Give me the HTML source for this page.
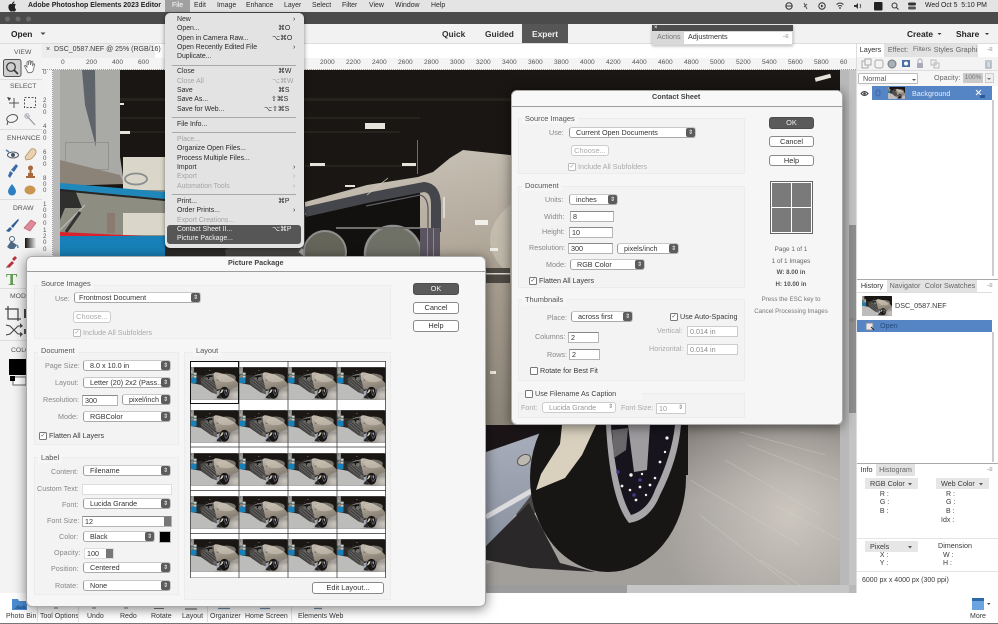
<!DOCTYPE html>
<html><head><meta charset="utf-8"><title>Photoshop Elements</title>
<style>
html,body{margin:0;padding:0;background:#fff}
#w{position:relative;width:998px;height:624px;overflow:hidden;background:#f1f1f1;font-family:"Liberation Sans",sans-serif;color:#333;filter:blur(.3px)}
#w div,#w svg{position:absolute}
.t{position:absolute;line-height:10px;height:10px;white-space:nowrap;font-size:7.2px;color:#3a3a3a}
.l{color:#888}
.d{color:#aaa}
.b{font-weight:bold}
.m{font-size:6.9px;color:#2a2a2a}
.s{position:absolute;background:#fff;border:1px solid #c8c8c8;border-left-color:#999;border-bottom-color:#aaa;border-radius:3px;box-sizing:border-box;font-size:7.2px;line-height:10px;color:#333;padding-left:6px;white-space:nowrap}
.s i{position:absolute;right:0;top:0;bottom:0;width:9px;background:#5c5c5c;border-radius:2px;color:#fff;font:normal 6px/10px "DejaVu Sans",sans-serif;text-align:center}
.n{position:absolute;background:#fff;border:1px solid #b5b5b5;border-top-color:#888;box-sizing:border-box;font-size:7.2px;line-height:9px;padding-left:2px;color:#333}
.g{position:absolute;background:#f3f3f3;border:1px solid #ececec;box-sizing:border-box}
.h{position:absolute;background:#f6f6f6;padding:0 3px;font-size:7.4px;line-height:10px;height:10px;color:#555}
.c{position:absolute;width:8px;height:8px;box-sizing:border-box;border:1px solid #777;border-radius:1.5px;background:#fff;font:bold 6px/6px "DejaVu Sans",sans-serif;color:#444;text-align:center}
.c.o{border-color:#bbb;color:#999}
.bt{position:absolute;box-sizing:border-box;background:#fff;border:1px solid #8a8a8a;border-radius:3px;text-align:center;font-size:7.4px;line-height:9px;color:#333}
.bt.k{background:#5a5a5a;color:#eee;border-color:#4d4d4d}
.bt.o{color:#aaa;border-color:#ccc}
.dl{position:absolute;background:#f6f6f6;border-radius:6px;box-shadow:0 2px 12px rgba(0,0,0,.5);border:1px solid #aaa;box-sizing:border-box}
.tab{position:absolute;background:#e2e2e2;font-size:7.2px;line-height:12px;text-align:center;color:#666}
.tab.a{background:#fff;color:#333}
</style></head><body><div id="w">

<svg width="0" height="0" style="left:0;top:0"><defs>
<linearGradient id="fd" gradientUnits="userSpaceOnUse" x1="0" y1="425" x2="0" y2="500"><stop offset="0" stop-color="#7e7974" stop-opacity=".9"/><stop offset="1" stop-color="#7e7974" stop-opacity="0"/></linearGradient>
<radialGradient id="fb" gradientUnits="userSpaceOnUse" cx="790" cy="515" r="130"><stop offset="0" stop-color="#cbc6be"/><stop offset="1" stop-color="#cbc6be" stop-opacity="0"/></radialGradient>
<linearGradient id="bd" gradientUnits="userSpaceOnUse" x1="440" y1="150" x2="500" y2="425"><stop offset="0" stop-color="#c6bfb3"/><stop offset=".45" stop-color="#aba193"/><stop offset="1" stop-color="#8c8478"/></linearGradient>
<linearGradient id="fn" x1="0" y1="0" x2="0" y2="1"><stop offset="0" stop-color="#a9afbb"/><stop offset="1" stop-color="#8b92a0"/></linearGradient>
<linearGradient id="gr" x1="0" y1="0" x2="1" y2="0"><stop offset="0" stop-color="#111"/><stop offset="1" stop-color="#eee"/></linearGradient>
<symbol id="p" viewBox="0 0 780 520"><g transform="translate(-60 -70)">
<rect x="60" y="70" width="780" height="520" fill="#191613"/>
<rect x="120" y="98" width="720" height="3" fill="#26221e"/><rect x="120" y="117" width="300" height="2" fill="#26221e"/><rect x="120" y="131" width="280" height="2" fill="#26221e"/><rect x="305" y="165" width="110" height="2" fill="#26221e"/>
<g fill="#e6e3da"><rect x="365" y="123" width="20" height="6"/><rect x="310" y="163" width="15" height="3"/><rect x="402" y="163" width="14" height="3"/><rect x="345" y="185" width="10" height="2"/><rect x="120" y="131" width="10" height="3"/><rect x="120" y="103" width="4" height="2"/><rect x="815" y="76" width="16" height="4" transform="rotate(-15 822 78)"/></g>
<rect x="417" y="140" width="1" height="34" fill="#6e6e6c"/>
<!-- left wall -->
<path d="M60 70H120V157L124 183H60Z" fill="#a9a9a5"/>
<path d="M82 70H95L96 147L85 105Z" fill="#5f646b"/>
<rect x="65.500" y="142.500" width="43" height="27" fill="none" stroke="#929290"/>
<path d="M60 160L120 175L124 184L60 186Z" fill="#8b8278"/>
<rect x="123" y="157" width="42" height="40" fill="#dad7ca"/>
<ellipse cx="136" cy="179" rx="11" ry="5.500" fill="none" stroke="#8c8d90" stroke-width="1.800"/>
<rect x="60" y="190" width="105" height="50" fill="#8d8d82"/>
<rect x="123" y="213" width="42" height="22" fill="#dad7ca"/>
<rect x="107" y="213" width="8" height="20" fill="#8a7a70"/>
<path d="M60 190H75L82 208H65L60 220Z" fill="#2f2f2d"/>
<path d="M60 230L85 205" stroke="#bdbdb6" stroke-width="1.200"/><path d="M66 232L80 212" stroke="#333" stroke-width="3"/>
<path d="M60 183L165 192V199L60 189Z" fill="#1f87ba"/><path d="M60 189L165 199V201L60 191Z" fill="#252525"/>
<path d="M60 232L165 237V240L60 236Z" fill="#d8222c"/>
<path d="M60 236H165V330L60 320Z" fill="#1880b8"/>
<!-- lower left floor & front (only seen in thumbnails) -->
<path d="M60 320L230 350L400 470L560 520L590 590H60Z" fill="#bcbcbb"/>
<path d="M165 192L305 202L305 260L240 340L165 330Z" fill="#2e2c2a"/>
<path d="M225 250L310 205L440 250L590 430L530 520L400 470L240 350Z" fill="#4b4947"/>
<g stroke="#a6a6a4" stroke-width="5" fill="none"><path d="M240 290L420 440M270 270L460 430M300 250L500 410M330 240L530 400"/></g>
<g stroke="#1d1d1d" stroke-width="4" fill="none"><path d="M255 285L440 440M290 265L480 420M320 245L515 405"/></g>
<!-- body beige -->
<path d="M305 202L367 185L418 177L433 172L450 158L463 150L510 155L640 190L780 270L840 340V370L700 425H486L455 300L440 255L305 240Z" fill="url(#bd)"/>
<ellipse cx="640" cy="240" rx="150" ry="70" fill="#d4cdbf" opacity=".5"/>
<!-- floor -->
<path d="M840 365V590H420L600 520L680 425L700 425Z" fill="#a29e9a"/>
<rect x="430" y="425" width="410" height="165" fill="url(#fd)"/>
<rect x="640" y="425" width="200" height="165" fill="url(#fb)"/>
<g stroke="#d8d4ce" stroke-width=".8" fill="none" opacity=".4"><path d="M740 432L825 455M748 445L838 480M690 480L800 545M700 515L790 585M775 505L840 540M725 460L820 515M760 560L800 585"/></g>
<!-- chrome arch -->
<path d="M305 215L367 202L420 192V258H305Z" fill="#131110"/>
<path d="M305 212L367 198L424 187Q436 188 436 205V232" stroke="#45464b" stroke-width="10" fill="none"/>
<path d="M366 206L420 195Q428 197 428 210V230" stroke="#5c5d63" stroke-width="1.300" fill="none"/>
<path d="M367 195L388 178" stroke="#cfcabd" stroke-width=".8"/>
<circle cx="325" cy="252" r="21" fill="#65655a" stroke="#8f8f8f" stroke-width="2"/>
<circle cx="393" cy="254" r="28" fill="#6f7066" stroke="#8f8f8f" stroke-width="2.500"/>
<rect x="336" y="227" width="84" height="2" fill="#6e6e6a"/>
<rect x="420" y="228" width="20" height="28" fill="#5a5460"/><rect x="427" y="228" width="1" height="28" fill="#8e8a94"/><rect x="433" y="228" width="1" height="28" fill="#8e8a94"/>
<rect x="443" y="197" width="2" height="21" fill="#ddd9cf"/>
<rect x="475" y="220" width="13" height="5" fill="#f2f0ea"/><rect x="490" y="248" width="8" height="3" fill="#efece5"/>
<rect x="486" y="268" width="24" height="15" fill="#4f4a44"/><rect x="486" y="273" width="24" height="1.500" fill="#dcd8ce"/>
<rect x="490" y="371" width="6" height="3" fill="#eeeae2"/>
<!-- dark band & fender -->
<rect x="486" y="425" width="60" height="30" fill="#1b1518"/>
<path d="M486 452L564 425V433L536 487L529 498L496 540L486 546Z" fill="url(#fn)"/>
<path d="M486 517L533 490" stroke="#dcdcde" stroke-width="5"/>
<ellipse cx="524" cy="460" rx="7" ry="5" fill="#bdb9b0" stroke="#555" transform="rotate(-30 524 460)"/>
<path d="M486 546L529 503L560 563L595 572L530 568L486 560Z" fill="#2a2829"/>
<!-- tyre: solid black -->
<ellipse cx="608" cy="478" rx="78" ry="94" fill="#181615"/>
<rect x="590" y="425" width="98" height="50" fill="#181615"/>
<!-- beige flare over the tyre's upper left -->
<path d="M562 425H596L582 455L565 478L536 490L541 474L560 444Z" fill="#d9d1be"/>
<!-- rim -->
<path d="M606 425Q610 500 629 523Q650 520 660 495Q678 460 681 425Z" fill="#a8a6a8"/>
<path d="M611 425Q616 490 631 515Q648 510 655 490Q672 455 675 425Z" fill="#17141d"/>
<path d="M628 425H650L647 470L634 472Z" fill="#9e9c9e"/>
<path d="M612 430L628 428L626 450L614 458Z" fill="#6a686a"/>
<g fill="#f4f2f2"><circle cx="622" cy="486" r="1.400"/><circle cx="630" cy="490" r="1.300"/><circle cx="636" cy="500" r="1.400"/><circle cx="640" cy="487" r="1.400"/><circle cx="646" cy="495" r="1.200"/><circle cx="650" cy="485" r="1.400"/><circle cx="655" cy="478" r="1.300"/><circle cx="660" cy="462" r="1.400"/><circle cx="665" cy="452" r="1.200"/><circle cx="667" cy="438" r="1.600"/><circle cx="631" cy="475" r="1.700"/><circle cx="642" cy="474" r="1.200"/></g>
<g fill="#3c3c8c"><circle cx="618" cy="472" r="1.800"/><circle cx="634" cy="495" r="1.800"/><circle cx="640" cy="480" r="1.800"/></g>
</g></symbol>
</defs></svg>

<!-- menu bar -->
<div style="left:0;top:0;width:998px;height:12px;background:#e4e4e4"></div>
<div style="left:165px;top:0;width:25px;height:12px;background:#a0a0a0"></div>
<div class="t b" style="left:28px;top:1px;font-size:7px;color:#222">Adobe Photoshop Elements 2023 Editor</div>
<div class="t m" style="left:172px;top:1px;color:#fff">File</div>
<div class="t m" style="left:194px;top:1px">Edit</div>
<div class="t m" style="left:217px;top:1px">Image</div>
<div class="t m" style="left:246px;top:1px">Enhance</div>
<div class="t m" style="left:284px;top:1px">Layer</div>
<div class="t m" style="left:312px;top:1px">Select</div>
<div class="t m" style="left:342px;top:1px">Filter</div>
<div class="t m" style="left:369px;top:1px">View</div>
<div class="t m" style="left:395px;top:1px">Window</div>
<div class="t m" style="left:431px;top:1px">Help</div>
<div class="t m" style="left:925px;top:1px;color:#222">Wed Oct 5&nbsp; 5:10 PM</div>
<!-- title bar -->
<div style="left:0;top:12px;width:998px;height:12px;background:#4b4b4b"></div>
<!-- top toolbar -->
<div style="left:0;top:24px;width:998px;height:20px;background:#f2f2f2;border-bottom:1px solid #ddd;box-sizing:border-box"></div>
<div style="left:522px;top:24px;width:46px;height:19px;background:#565656"></div>
<div class="t b" style="left:11px;top:29px;font-size:8.4px;color:#222">Open</div>
<div class="t b" style="left:442px;top:29px;font-size:8.4px;color:#333">Quick</div>
<div class="t b" style="left:485px;top:29px;font-size:8.4px;color:#333">Guided</div>
<div class="t b" style="left:532px;top:29px;font-size:8.4px;color:#f0f0f0">Expert</div>
<div class="t b" style="left:907px;top:29px;font-size:8.4px;color:#222">Create</div>
<div class="t b" style="left:956px;top:29px;font-size:8.4px;color:#222">Share</div>
<!-- doc tab -->
<div style="left:42px;top:44px;width:814px;height:14px;background:#fff"></div>
<div style="left:42px;top:44px;width:113px;height:14px;background:#ededed"></div>
<div class="t" style="left:46px;top:45px;font-size:7px">×&nbsp; DSC_0587.NEF @ 25% (RGB/16)</div>
<!-- ruler -->
<div style="left:42px;top:58px;width:814px;height:12px;background:#f4f4f4;border-bottom:1px dotted #999;box-sizing:border-box"></div>
<div style="left:42px;top:70px;width:11px;height:523px;background:#f4f4f4;border-right:1px dotted #999;box-sizing:border-box"></div>
<div class="t" style="left:61px;top:58px;font-size:6.6px;color:#555">0</div><div class="t" style="left:86px;top:58px;font-size:6.6px;color:#555">200</div><div class="t" style="left:112px;top:58px;font-size:6.6px;color:#555">400</div><div class="t" style="left:138px;top:58px;font-size:6.6px;color:#555">600</div>
<div class="t" style="left:320px;top:58px;font-size:6.6px;color:#555">2000</div><div class="t" style="left:346px;top:58px;font-size:6.6px;color:#555">2200</div><div class="t" style="left:372px;top:58px;font-size:6.6px;color:#555">2400</div><div class="t" style="left:398px;top:58px;font-size:6.6px;color:#555">2600</div><div class="t" style="left:424px;top:58px;font-size:6.6px;color:#555">2800</div><div class="t" style="left:450px;top:58px;font-size:6.6px;color:#555">3000</div><div class="t" style="left:476px;top:58px;font-size:6.6px;color:#555">3200</div><div class="t" style="left:502px;top:58px;font-size:6.6px;color:#555">3400</div><div class="t" style="left:528px;top:58px;font-size:6.6px;color:#555">3600</div><div class="t" style="left:554px;top:58px;font-size:6.6px;color:#555">3800</div><div class="t" style="left:580px;top:58px;font-size:6.6px;color:#555">4000</div><div class="t" style="left:606px;top:58px;font-size:6.6px;color:#555">4200</div><div class="t" style="left:632px;top:58px;font-size:6.6px;color:#555">4400</div><div class="t" style="left:658px;top:58px;font-size:6.6px;color:#555">4600</div><div class="t" style="left:684px;top:58px;font-size:6.6px;color:#555">4800</div><div class="t" style="left:710px;top:58px;font-size:6.6px;color:#555">5000</div><div class="t" style="left:736px;top:58px;font-size:6.6px;color:#555">5200</div><div class="t" style="left:762px;top:58px;font-size:6.6px;color:#555">5400</div><div class="t" style="left:788px;top:58px;font-size:6.6px;color:#555">5600</div><div class="t" style="left:814px;top:58px;font-size:6.6px;color:#555">5800</div><div class="t" style="left:840px;top:58px;font-size:6.6px;color:#555">60</div>
<div class="t" style="left:43px;top:70px;font-size:6.2px;color:#555;white-space:normal;width:6px;line-height:6.2px">0</div>
<div class="t" style="left:43px;top:98px;font-size:6.2px;color:#555;white-space:normal;width:5px;line-height:6.2px;height:20px">2 0 0</div>
<div class="t" style="left:43px;top:124px;font-size:6.2px;color:#555;white-space:normal;width:5px;line-height:6.2px;height:20px">4 0 0</div>
<div class="t" style="left:43px;top:150px;font-size:6.2px;color:#555;white-space:normal;width:5px;line-height:6.2px;height:20px">6 0 0</div>
<div class="t" style="left:43px;top:176px;font-size:6.2px;color:#555;white-space:normal;width:5px;line-height:6.2px;height:20px">8 0 0</div>
<div class="t" style="left:43px;top:202px;font-size:6.2px;color:#555;white-space:normal;width:5px;line-height:6.2px;height:26px">1 0 0 0</div>
<div class="t" style="left:43px;top:228px;font-size:6.2px;color:#555;white-space:normal;width:5px;line-height:6.2px;height:26px">1 2 0 0</div>
<!-- canvas -->
<div style="left:53px;top:70px;width:803px;height:523px;background:#b9b9b9"></div>
<svg style="left:60px;top:70px" width="780" height="515" viewBox="0 0 780 515"><use href="#p" width="780" height="520"/></svg>
<div style="left:849px;top:70px;width:7px;height:515px;background:#c4c4c4"></div>
<div style="left:849px;top:225px;width:7px;height:188px;background:#8f8f8f"></div>
<div style="left:53px;top:585px;width:796px;height:8px;background:#c6c6c6"></div>
<div style="left:53px;top:585px;width:574px;height:8px;background:#9c9c9c"></div>
<!-- left tools -->
<div style="left:0;top:44px;width:42px;height:549px;background:#f3f3f3"></div>
<div style="left:0;top:79px;width:42px;height:1px;background:#ddd"></div><div style="left:0;top:129px;width:42px;height:1px;background:#ddd"></div><div style="left:0;top:199px;width:42px;height:1px;background:#ddd"></div><div style="left:0;top:288px;width:42px;height:1px;background:#ddd"></div><div style="left:0;top:340px;width:42px;height:1px;background:#ddd"></div>
<div class="t" style="left:14px;top:48px;font-size:6.8px;color:#555">VIEW</div>
<div class="t" style="left:10px;top:82px;font-size:6.8px;color:#555">SELECT</div>
<div class="t" style="left:7px;top:134px;font-size:6.8px;color:#555">ENHANCE</div>
<div class="t" style="left:13px;top:204px;font-size:6.8px;color:#555">DRAW</div>
<div class="t" style="left:10px;top:292px;font-size:6.8px;color:#555">MODIFY</div>
<div class="t" style="left:11px;top:346px;font-size:6.8px;color:#555">COLOR</div>
<div class="t" style="left:6px;top:271px;font:bold 17px/17px 'Liberation Serif',serif;color:#5f9c4e;height:17px">T</div>
<!-- bottom bar -->
<div style="left:0;top:593px;width:998px;height:30px;background:#fff"></div>
<div style="left:0;top:623px;width:998px;height:1px;background:#777"></div>
<div class="t" style="left:6px;top:612px;font-size:7px">Photo Bin</div><div class="t" style="left:40px;top:612px;font-size:7px">Tool Options</div><div class="t" style="left:87px;top:612px;font-size:7px">Undo</div><div class="t" style="left:120px;top:612px;font-size:7px">Redo</div><div class="t" style="left:151px;top:612px;font-size:7px">Rotate</div><div class="t" style="left:182px;top:612px;font-size:7px">Layout</div><div class="t" style="left:210px;top:612px;font-size:7px">Organizer</div><div class="t" style="left:245px;top:612px;font-size:7px">Home Screen</div><div class="t" style="left:298px;top:612px;font-size:7px">Elements Web</div><div class="t" style="left:970px;top:612px;font-size:7px">More</div>
<!-- right panels -->
<div style="left:856px;top:44px;width:142px;height:549px;background:#fff"></div>
<div style="left:856px;top:44px;width:1px;height:549px;background:#ddd"></div>
<div style="left:992px;top:100px;width:2px;height:176px;background:#cdcdcd"></div>
<div style="left:992px;top:332px;width:2px;height:130px;background:#cdcdcd"></div>
<div class="tab a" style="left:857px;top:44px;width:27px;height:13px">Layers</div>
<div class="tab" style="left:884px;top:44px;width:28px;height:13px">Effect:</div>
<div class="tab" style="left:912px;top:44px;width:20px;height:13px;overflow:hidden;font-size:6.6px">Filters</div>
<div class="tab" style="left:932px;top:44px;width:23px;height:13px">Styles</div>
<div class="tab" style="left:955px;top:44px;width:23px;height:13px;overflow:hidden">Graphi</div>
<div class="t" style="left:987px;top:45px;font-size:6px;color:#777">-≡</div>
<div style="left:857px;top:57px;width:141px;height:14px;background:#f3f3f3;border-bottom:1px solid #ddd;box-sizing:border-box"></div>
<div style="left:857px;top:71px;width:141px;height:15px;background:#f6f6f6"></div>
<div class="s" style="left:858px;top:73px;width:60px;height:11px;border-radius:1px;border-color:#bbb;color:#555;padding-left:4px;line-height:9px">Normal</div>
<div class="t l" style="left:934px;top:73px;color:#666">Opacity:</div>
<div class="t" style="left:963px;top:73px;width:20px;height:10px;background:#cacaca;color:#777;text-align:center;font-size:6.6px">100%</div>
<div style="left:985px;top:73px;width:9px;height:10px;background:#eee;border:1px solid #ccc;box-sizing:border-box"></div>
<div style="left:872px;top:86px;width:120px;height:14px;background:#5585c4"></div>
<div class="t" style="left:912px;top:89px;color:#e8eefb">Background</div>
<svg style="left:888px;top:87px" width="17" height="12" viewBox="0 0 780 520" preserveAspectRatio="none"><use href="#p" width="780" height="520"/></svg>
<!-- history -->
<div style="left:857px;top:279px;width:141px;height:1px;background:#aaa"></div>
<div class="tab a" style="left:857px;top:280px;width:30px;height:12px">History</div>
<div class="tab" style="left:887px;top:280px;width:36px;height:12px">Navigator</div>
<div class="tab" style="left:923px;top:280px;width:54px;height:12px">Color Swatches</div>
<div class="t" style="left:987px;top:281px;font-size:6px;color:#777">-≡</div>
<div style="left:857px;top:292px;width:135px;height:1px;background:#ddd"></div>
<svg style="left:862px;top:296px" width="30" height="20" viewBox="0 0 780 520" preserveAspectRatio="none"><use href="#p" width="780" height="520"/></svg>
<div class="t" style="left:895px;top:301px;font-size:7.2px">DSC_0587.NEF</div>
<div style="left:857px;top:320px;width:135px;height:12px;background:#5585c4"></div>
<div class="t" style="left:880px;top:321px;color:#244a7c">Open</div>
<!-- info -->
<div style="left:857px;top:463px;width:141px;height:1px;background:#aaa"></div>
<div class="tab a" style="left:857px;top:464px;width:19px;height:12px">Info</div>
<div class="tab" style="left:876px;top:464px;width:39px;height:12px">Histogram</div>
<div class="t" style="left:987px;top:465px;font-size:6px;color:#777">-≡</div>
<div class="t" style="left:865px;top:478px;width:53px;height:11px;background:#e6e6e6;line-height:11px;padding-left:5px;box-sizing:border-box;font-size:7.2px">RGB Color</div>
<div class="t" style="left:936px;top:478px;width:53px;height:11px;background:#e6e6e6;line-height:11px;padding-left:5px;box-sizing:border-box;font-size:7.2px">Web Color</div>
<div class="t" style="left:876px;top:491px;font-size:7px;line-height:8.3px;height:26px;white-space:pre">  R :
  G :
  B :</div>
<div class="t" style="left:946px;top:491px;font-size:7px;line-height:8.3px;height:26px;white-space:pre">R :
G :
B :</div>
<div class="t" style="left:941px;top:516px;font-size:7px">Idx :</div>
<div style="left:857px;top:538px;width:141px;height:1px;background:#e4e4e4"></div>
<div class="t" style="left:865px;top:541px;width:53px;height:11px;background:#e6e6e6;line-height:11px;padding-left:5px;box-sizing:border-box;font-size:7.2px">Pixels</div>
<div class="t" style="left:938px;top:541px;font-size:7.2px">Dimension</div>
<div class="t" style="left:876px;top:552px;font-size:7px;line-height:8.3px;height:20px;white-space:pre">  X :
  Y :</div>
<div class="t" style="left:943px;top:552px;font-size:7px;line-height:8.3px;height:20px;white-space:pre">W :
H :</div>
<div style="left:857px;top:571px;width:141px;height:1px;background:#e4e4e4"></div>
<div class="t" style="left:862px;top:576px;font-size:7px">6000 px x 4000 px (300 ppi)</div>
<!-- adjustments float -->
<div style="left:652px;top:25px;width:141px;height:20px;background:#d8d8d8;box-shadow:0 1px 3px rgba(0,0,0,.3)"></div>
<div style="left:652px;top:25px;width:141px;height:6px;background:#4d4d4d"></div>
<div class="t" style="left:654px;top:23px;font-size:6px;color:#fff">×</div>
<div class="t" style="left:657px;top:32px;color:#777">Actions</div>
<div style="left:684px;top:32px;width:108px;height:12px;background:#fff"></div>
<div class="t" style="left:688px;top:32px;color:#333">Adjustments</div>
<div class="t" style="left:783px;top:32px;font-size:6px;color:#777">-≡</div>

<!-- icons -->
<svg style="left:0;top:0" width="998" height="624" fill="none">
<!-- apple -->
<path d="M13.5 3.4c.6-.7 1-1.2 1-2-.8.1-1.500.5-1.900 1.100-.4.5-.7 1.100-.6 1.800.7 0 1.100-.4 1.500-.900zM14.900 6.500c0-1.100.900-1.700 1-1.700-.5-.8-1.400-1-1.700-1-.7 0-1.300.5-1.700.5s-1-.4-1.600-.4c-.9 0-1.700.5-2.100 1.300-.9 1.600-.2 3.900.7 5.100.4.600.9 1.300 1.500 1.300s.9-.4 1.600-.4 1 .4 1.600.4 1-.600 1.400-1.200c.4-.600.6-1.200.6-1.200s-1.300-.5-1.300-2z" fill="#222"/>
<!-- status icons -->
<circle cx="789" cy="6" r="3.200" stroke="#333"/><path d="M786 6h6" stroke="#333"/>
<path d="M804 3l3 6M804 7l3-3" stroke="#555"/>
<circle cx="822" cy="6" r="3.200" stroke="#333"/><path d="M821 4.500l2.500 1.500-2.500 1.500z" fill="#333"/>
<path d="M836.500 4.500q3.500-3 7 0M838 6.300q2-1.500 4 0" stroke="#333"/><circle cx="840" cy="8" r=".9" fill="#333"/>
<path d="M854 5h2l2-2v6l-2-2h-2z" fill="#333"/><path d="M860 4q1.200 2 0 4" stroke="#555"/>
<rect x="874" y="2" width="8.500" height="8.500" rx="1" fill="#222"/>
<circle cx="894.500" cy="5.500" r="2.500" stroke="#333"/><path d="M896.500 7.500l2 2" stroke="#333"/>
<rect x="908" y="2.500" width="8" height="3" rx="1.500" fill="#333"/><rect x="908" y="6.500" width="8" height="3" rx="1.500" fill="#555"/>
<!-- traffic -->
<circle cx="7.500" cy="19" r="2.500" fill="#6a6a6a"/><circle cx="18" cy="19" r="2.500" fill="#6a6a6a"/><circle cx="28.500" cy="19" r="2.500" fill="#6a6a6a"/>
<path d="M40.500 32.500h5l-2.500 2.500z" fill="#444"/><path d="M937.500 33h4l-2 2z" fill="#333"/><path d="M985 33h4l-2 2z" fill="#333"/>
<!-- tool icons -->
<rect x="3.500" y="59.500" width="17.500" height="17" rx="2" fill="#cfcfcf" stroke="#555"/>
<circle cx="11" cy="67" r="4.300" stroke="#333" stroke-width="1.200"/><path d="M14 70l4 4" stroke="#333" stroke-width="1.600"/>
<path d="M26 69l-1.500-3q.5-1.200 1.500 0l1 1v-5q1-1.200 1.500 0v3l.5-4q1-1 1.500 0v4l1-3.500q1-.8 1.400.4l-.4 4 1-2q1-.5 1 .8l-1 5q-1 3-3.500 3h-2z" fill="#fff" stroke="#666" stroke-width=".8"/>
<path d="M14 98v10M9 103h10" stroke="#555"/><path d="M7 97l4 1-2 3z" fill="#444"/>
<rect x="24.500" y="97.500" width="11" height="10" stroke="#555" stroke-dasharray="2 1.500"/>
<ellipse cx="12" cy="118.500" rx="5.500" ry="3.800" stroke="#555" transform="rotate(-15 12 118)"/><path d="M8 121l-1 4" stroke="#555"/>
<path d="M26 115l9 10" stroke="#999" stroke-width="1.200"/><circle cx="27" cy="116" r="2.200" stroke="#aab"/>
<ellipse cx="13" cy="155" rx="5.500" ry="3" stroke="#556"/><circle cx="13" cy="155" r="2" fill="#456"/><path d="M6 150l3 2" stroke="#4a79b0" stroke-width="1.500"/>
<path d="M26 160l-1-3 6-8q4-1 5 2t-5 8z" fill="#e9d0ae" stroke="#b08a5c" stroke-width=".7"/>
<path d="M8 176l2-5 3 2-3 5zM11 170l5-6 2 2-4 6z" fill="#3a6aa8"/>
<path d="M26 176h9v2h-9zM28 173h5v3h-5z" fill="#a9683c"/><circle cx="30.500" cy="168" r="2.500" fill="#a9683c"/><path d="M30.500 170v3" stroke="#a9683c" stroke-width="2"/>
<path d="M12 184q4 5 4 7.500a4 4 0 0 1-8 0q0-2.500 4-7.500z" fill="#2e7fc2"/>
<ellipse cx="30" cy="190" rx="5.500" ry="4.500" fill="#c9964f"/>
<path d="M6 231l4-4 2 2-3 3zM11 226l7-7 1 1-6 8z" fill="#2e5f96"/>
<path d="M24 228l7-8 5 3-6 8z" fill="#dd8a9a" stroke="#b56" stroke-width=".6"/>
<path d="M7 247l4-6 6 4-3 4h-4z" fill="#4e6a82"/><circle cx="12" cy="239" r="2.500" stroke="#4e6a82"/><path d="M17 245q1 1 1 3" stroke="#4a90c4" stroke-width="1.500"/>
<rect x="25" y="238" width="11" height="10" fill="url(#gr)"/>
<path d="M7 266l5-5 2 2-5 5zM12 259l3-3 2 2-3 3z" fill="#b8323c"/><path d="M7 266l-1 2 2-.5z" fill="#555"/>
<path d="M8 306v13h13M5 309h13v12" stroke="#444" stroke-width="1.200"/>
<path d="M6 325l4 1 8 8h3M6 335l4-1 8-8h3" stroke="#444" stroke-width="1.100"/><path d="M20 323l3 3-3 2zM20 332l3 2-3 3z" fill="#444"/>
<rect x="24" y="309" width="2" height="9" fill="#444"/><rect x="24" y="329" width="2" height="5" fill="#555"/>
<rect x="9" y="359" width="17" height="16" fill="#000"/>
<rect x="13" y="377" width="13" height="8" fill="#fff" stroke="#666"/><rect x="10" y="376" width="5" height="5" fill="#000"/>
<!-- bottom icons -->
<path d="M12 599h6l1 2h8v9H12z" fill="#4b8bd0"/><path d="M14 609l4-4 3 2 3-2 3 4z" fill="#2f6aa8"/>
<path d="M37.500 594v28M78.500 594v28M207.500 594v28M291.500 594v28" stroke="#e2e2e2"/>
<rect x="972" y="598" width="12" height="12" fill="#6aa5e0"/><rect x="972" y="598" width="12" height="3" fill="#2f6aa8"/><path d="M987 603h3.500l-1.700 2z" fill="#444"/>
<path d="M54 608h4M92 608h4M124 608h4M154 608.500h10" stroke="#777" stroke-width="1"/><path d="M185 609h12" stroke="#555" stroke-width="1"/><path d="M218 608.500h12M260 608.500h10M314 608.500h8" stroke="#6b8cb0" stroke-width="1.200"/>
<!-- layers panel icons -->
<rect x="862" y="61" width="6" height="7" stroke="#aaa"/><rect x="865" y="59" width="6" height="6" fill="#f3f3f3" stroke="#aaa"/>
<rect x="875" y="60" width="8" height="8" rx="2" stroke="#aaa"/><circle cx="892" cy="64" r="4" fill="#aab0ba" stroke="#777"/>
<rect x="902" y="60" width="8" height="7" fill="#4a72a8"/><circle cx="906" cy="63.500" r="2" fill="#fff"/>
<rect x="917" y="63" width="6" height="5" fill="#aab"/><path d="M918 63v-2a2 2 0 0 1 4 0v2" stroke="#aab"/>
<rect x="931" y="60" width="5" height="5" stroke="#bbb"/><rect x="934" y="63" width="5" height="5" stroke="#bbb"/>
<path d="M985 61h7M986 62v6h5v-6" stroke="#aab" stroke-width="1.300" fill="#cdd"/>
<path d="M912 79h4l-2 2z" fill="#555"/><path d="M987 78h4l-2 2z" fill="#777"/>
<path d="M861 93.500q3.500-4 7 0q-3.500 4-7 0z" stroke="#444"/><circle cx="864.500" cy="93.500" r="1.300" fill="#444"/>
<rect x="876" y="90" width="4" height="6" rx="2" stroke="#3c68a8"/>
<path d="M976 90l5 5M981 90l-5 5" stroke="#fff"/><rect x="980" y="95" width="5" height="3" fill="#2a5a9c"/>
<rect x="866" y="323" width="7" height="7" fill="#e8e8e8" stroke="#889"/><path d="M871 327l3 3" stroke="#222"/>
<path d="M908 483h4l-2 2.500zM979 483h4l-2 2.500zM908 546h4l-2 2.500z" fill="#555"/>
<path d="M851 318v4M853 318v4" stroke="#777"/>
</svg>

<!-- Contact Sheet dialog -->
<div class="dl" style="left:511px;top:90px;width:332px;height:335px"></div>
<div style="left:512px;top:91px;width:330px;height:15px;background:#f8f8f8;border-bottom:1px solid #9c9c9c;border-radius:5px 5px 0 0"></div>
<div class="t b" style="left:652px;top:92px;color:#444;font-size:7.2px">Contact Sheet</div>
<div class="g" style="left:518px;top:118px;width:227px;height:56px"></div><div class="h" style="left:522px;top:114px">Source Images</div>
<div class="t l" style="left:549px;top:128px">Use:</div>
<div class="s" style="left:569px;top:127px;width:127px;height:11px;line-height:9px">Current Open Documents<i>⇕</i></div>
<div class="bt o" style="left:571px;top:145px;width:38px;height:11px">Choose...</div>
<div class="c o" style="left:568px;top:163px">✓</div><div class="t d" style="left:578px;top:162px">Include All Subfolders</div>
<div class="g" style="left:518px;top:186px;width:227px;height:102px"></div><div class="h" style="left:522px;top:181px">Document</div>
<div class="t l" style="left:545px;top:195px">Units:</div><div class="s" style="left:569px;top:194px;width:49px;height:11px;line-height:9px">inches<i>⇕</i></div>
<div class="t l" style="left:544px;top:212px">Width:</div><div class="n" style="left:570px;top:211px;width:44px;height:11px">8</div>
<div class="t l" style="left:542px;top:227px">Height:</div><div class="n" style="left:569px;top:227px;width:44px;height:11px">10</div>
<div class="t l" style="left:529px;top:243px">Resolution:</div><div class="n" style="left:568px;top:243px;width:45px;height:11px">300</div>
<div class="s" style="left:617px;top:243px;width:62px;height:11px;line-height:9px">pixels/inch<i>⇕</i></div>
<div class="t l" style="left:546px;top:260px">Mode:</div><div class="s" style="left:570px;top:259px;width:75px;height:11px;line-height:9px">RGB Color<i>⇕</i></div>
<div class="c" style="left:529px;top:277px">✓</div><div class="t" style="left:539px;top:276px">Flatten All Layers</div>
<div class="g" style="left:518px;top:299px;width:227px;height:82px"></div><div class="h" style="left:522px;top:295px">Thumbnails</div>
<div class="t l" style="left:547px;top:313px">Place:</div><div class="s" style="left:571px;top:311px;width:62px;height:11px;line-height:9px">across first<i>⇕</i></div>
<div class="c" style="left:670px;top:313px">✓</div><div class="t" style="left:680px;top:312px">Use Auto-Spacing</div>
<div class="t l" style="left:535px;top:332px">Columns:</div><div class="n" style="left:568px;top:332px;width:31px;height:11px">2</div>
<div class="t l" style="left:547px;top:350px">Rows:</div><div class="n" style="left:569px;top:349px;width:31px;height:11px">2</div>
<div class="t d" style="left:657px;top:326px">Vertical:</div><div class="n" style="left:687px;top:326px;width:51px;height:11px;color:#888;border-color:#ccc">0.014 in</div>
<div class="t d" style="left:649px;top:344px">Horizontal:</div><div class="n" style="left:687px;top:344px;width:51px;height:11px;color:#888;border-color:#ccc">0.014 in</div>
<div class="c" style="left:530px;top:367px"></div><div class="t" style="left:540px;top:366px">Rotate for Best Fit</div>
<div class="g" style="left:518px;top:393px;width:227px;height:25px"></div><div class="h" style="left:524px;top:389px;width:112px;height:11px"></div>
<div class="c" style="left:525px;top:390px"></div><div class="t" style="left:535px;top:389px;color:#444">Use Filename As Caption</div>
<div class="t d" style="left:521px;top:403px">Font:</div><div class="s" style="left:542px;top:402px;width:74px;height:11px;line-height:9px;color:#999;border-color:#ccc;padding-left:6px">Lucida Grande</div>
<div class="t" style="left:608px;top:402px;font:6px/10px 'DejaVu Sans';color:#777">⇕</div>
<div class="t d" style="left:621px;top:403px">Font Size:</div><div class="n" style="left:656px;top:403px;width:30px;height:11px;color:#999;border-color:#ccc">10</div>
<div class="t" style="left:678px;top:403px;font:6px/10px 'DejaVu Sans';color:#777">⇕</div>
<div class="bt k" style="left:769px;top:117px;width:45px;height:12px">OK</div>
<div class="bt" style="left:769px;top:136px;width:45px;height:11px">Cancel</div>
<div class="bt" style="left:769px;top:155px;width:45px;height:11px">Help</div>
<svg style="left:770px;top:181px" width="43" height="53"><rect x=".5" y=".5" width="42" height="52" fill="#fff" stroke="#666"/><rect x="2" y="2" width="19" height="24" fill="#7a7a7a"/><rect x="22" y="2" width="19" height="24" fill="#7a7a7a"/><rect x="2" y="27" width="19" height="24" fill="#7a7a7a"/><rect x="22" y="27" width="19" height="24" fill="#7a7a7a"/></svg>
<div class="t" style="left:751px;top:245px;width:80px;text-align:center;font-size:6.4px;color:#666">Page 1 of 1</div>
<div class="t" style="left:751px;top:257px;width:80px;text-align:center;font-size:6.4px;color:#666">1 of 1 Images</div>
<div class="t b" style="left:751px;top:268px;width:80px;text-align:center;font-size:6.2px;color:#555">W: 8.00 in</div>
<div class="t b" style="left:751px;top:280px;width:80px;text-align:center;font-size:6.2px;color:#555">H: 10.00 in</div>
<div class="t" style="left:751px;top:295px;width:80px;text-align:center;font-size:6.2px;color:#777">Press the ESC key to</div>
<div class="t" style="left:741px;top:307px;width:100px;text-align:center;font-size:6.2px;color:#777">Cancel Processing Images</div>

<!-- Picture Package dialog -->
<div class="dl" style="left:26px;top:256px;width:460px;height:351px"></div>
<div style="left:27px;top:257px;width:458px;height:14px;background:#f8f8f8;border-bottom:1px solid #9c9c9c;border-radius:5px 5px 0 0"></div>
<div class="t b" style="left:228px;top:258px;color:#444;font-size:7.2px">Picture Package</div>
<div class="g" style="left:34px;top:285px;width:357px;height:54px"></div><div class="h" style="left:38px;top:279px">Source Images</div>
<div class="t l" style="left:55px;top:294px">Use:</div>
<div class="s" style="left:74px;top:292px;width:127px;height:11px;line-height:9px;padding-left:4px">Frontmost Document<i>⇕</i></div>
<div class="bt o" style="left:73px;top:311px;width:38px;height:12px;line-height:10px">Choose...</div>
<div class="c o" style="left:73px;top:329px">✓</div><div class="t d" style="left:83px;top:328px">Include All Subfolders</div>
<div class="g" style="left:34px;top:352px;width:145px;height:93px"></div><div class="h" style="left:38px;top:346px">Document</div>
<div class="t l" style="left:45px;top:361px">Page Size:</div><div class="s" style="left:83px;top:360px;width:88px;height:11px;line-height:9px">8.0 x 10.0 in<i>⇕</i></div>
<div class="t l" style="left:55px;top:378px">Layout:</div><div class="s" style="left:83px;top:377px;width:88px;height:11px;line-height:9px">Letter (20) 2x2 (Pass...<i>⇕</i></div>
<div class="t l" style="left:43px;top:395px">Resolution:</div><div class="n" style="left:82px;top:395px;width:36px;height:11px">300</div>
<div class="s" style="left:122px;top:394px;width:49px;height:11px;line-height:9px">pixel/inch<i>⇕</i></div>
<div class="t l" style="left:58px;top:412px">Mode:</div><div class="s" style="left:83px;top:411px;width:88px;height:11px;line-height:9px">RGBColor<i>⇕</i></div>
<div class="c" style="left:39px;top:432px">✓</div><div class="t" style="left:49px;top:431px">Flatten All Layers</div>
<div class="g" style="left:34px;top:457px;width:145px;height:138px"></div><div class="h" style="left:38px;top:453px">Label</div>
<div class="t l" style="left:51px;top:467px">Content:</div><div class="s" style="left:83px;top:465px;width:88px;height:11px;line-height:9px">Filename<i>⇕</i></div>
<div class="t l" style="left:37px;top:484px">Custom Text:</div><div class="n" style="left:82px;top:484px;width:90px;height:11px;border-color:#ddd"></div>
<div class="t l" style="left:62px;top:500px">Font:</div><div class="s" style="left:83px;top:498px;width:88px;height:11px;line-height:9px">Lucida Grande<i>⇕</i></div>
<div class="t l" style="left:47px;top:516px">Font Size:</div><div class="n" style="left:82px;top:516px;width:90px;height:11px">12<i style="position:absolute;right:0;top:0;width:7px;height:9px;background:#777"></i></div>
<div class="t l" style="left:59px;top:532px">Color:</div><div class="s" style="left:83px;top:531px;width:72px;height:11px;line-height:9px">Black<i>⇕</i></div>
<div style="left:159px;top:531px;width:12px;height:12px;background:#000;border:1px solid #bbb;box-sizing:border-box"></div>
<div class="t l" style="left:54px;top:548px">Opacity:</div><div class="n" style="left:84px;top:548px;width:30px;height:11px;border-color:#ddd">100<i style="position:absolute;right:0;top:0;width:7px;height:9px;background:#777"></i></div>
<div class="t l" style="left:51px;top:564px">Position:</div><div class="s" style="left:83px;top:562px;width:88px;height:11px;line-height:9px">Centered<i>⇕</i></div>
<div class="t l" style="left:55px;top:581px">Rotate:</div><div class="s" style="left:83px;top:580px;width:88px;height:11px;line-height:9px">None<i>⇕</i></div>
<div class="g" style="left:184px;top:352px;width:207px;height:248px"></div><div class="h" style="left:193px;top:346px">Layout</div>
<svg style="left:190px;top:361px" width="196" height="217">
<rect width="196" height="217" fill="#fff"/>
<use href="#p" x="0" y="6" width="49" height="33"/><use href="#p" x="49" y="6" width="49" height="33"/><use href="#p" x="98" y="6" width="49" height="33"/><use href="#p" x="147" y="6" width="49" height="33"/>
<use href="#p" x="0" y="49" width="49" height="33"/><use href="#p" x="49" y="49" width="49" height="33"/><use href="#p" x="98" y="49" width="49" height="33"/><use href="#p" x="147" y="49" width="49" height="33"/>
<use href="#p" x="0" y="92" width="49" height="33"/><use href="#p" x="49" y="92" width="49" height="33"/><use href="#p" x="98" y="92" width="49" height="33"/><use href="#p" x="147" y="92" width="49" height="33"/>
<use href="#p" x="0" y="135" width="49" height="33"/><use href="#p" x="49" y="135" width="49" height="33"/><use href="#p" x="98" y="135" width="49" height="33"/><use href="#p" x="147" y="135" width="49" height="33"/>
<use href="#p" x="0" y="178" width="49" height="33"/><use href="#p" x="49" y="178" width="49" height="33"/><use href="#p" x="98" y="178" width="49" height="33"/><use href="#p" x="147" y="178" width="49" height="33"/>
<path d="M49 0v217M98 0v217M147 0v217" stroke="#444" stroke-width=".8"/>
<path d="M0 86h196M0 129.500h196M0 172.500h196" stroke="#333" stroke-width=".8"/>
<path d="M.5 0v217h195V0M49 .5h147" stroke="#444" stroke-width=".8" fill="none"/>
<rect x=".5" y=".5" width="48" height="42" fill="none" stroke="#111"/>
</svg>
<div class="bt" style="left:312px;top:582px;width:72px;height:12px;line-height:10px">Edit Layout...</div>
<div class="bt k" style="left:413px;top:283px;width:46px;height:12px">OK</div>
<div class="bt" style="left:413px;top:302px;width:46px;height:12px;line-height:10px">Cancel</div>
<div class="bt" style="left:413px;top:320px;width:46px;height:12px;line-height:10px">Help</div>

<!-- File menu -->
<div style="left:165px;top:13px;width:139px;height:235px;background:#e3e3e3;border-radius:5px;box-shadow:0 1px 5px rgba(0,0,0,.45)"></div>
<div style="left:167px;top:225px;width:134px;height:19px;background:#565656;border-radius:3px"></div>
<div style="left:172px;top:65px;width:124px;height:1px;background:#a8a8a8"></div>
<div style="left:172px;top:117px;width:124px;height:1px;background:#a8a8a8"></div>
<div style="left:172px;top:132px;width:124px;height:1px;background:#a8a8a8"></div>
<div style="left:172px;top:194px;width:124px;height:1px;background:#a8a8a8"></div>
<div class="t m" style="left:177px;top:15px">New</div><div class="t m" style="left:293px;top:15px">›</div>
<div class="t m" style="left:177px;top:24px">Open...</div><div class="t m" style="left:278px;top:24px">⌘O</div>
<div class="t m" style="left:177px;top:34px">Open in Camera Raw...</div><div class="t m" style="left:272px;top:34px">⌥⌘O</div>
<div class="t m" style="left:177px;top:43px">Open Recently Edited File</div><div class="t m" style="left:293px;top:43px">›</div>
<div class="t m" style="left:177px;top:52px">Duplicate...</div>
<div class="t m" style="left:177px;top:67px">Close</div><div class="t m" style="left:278px;top:67px">⌘W</div>
<div class="t m d" style="left:177px;top:77px;color:#a5a5a5">Close All</div><div class="t m" style="left:272px;top:77px;color:#a5a5a5">⌥⌘W</div>
<div class="t m" style="left:177px;top:86px">Save</div><div class="t m" style="left:278px;top:86px">⌘S</div>
<div class="t m" style="left:177px;top:95px">Save As...</div><div class="t m" style="left:271px;top:95px">⇧⌘S</div>
<div class="t m" style="left:177px;top:105px">Save for Web...</div><div class="t m" style="left:264px;top:105px">⌥⇧⌘S</div>
<div class="t m" style="left:177px;top:120px">File Info...</div>
<div class="t m" style="left:177px;top:135px;color:#a5a5a5">Place...</div>
<div class="t m" style="left:177px;top:144px">Organize Open Files...</div>
<div class="t m" style="left:177px;top:154px">Process Multiple Files...</div>
<div class="t m" style="left:177px;top:163px">Import</div><div class="t m" style="left:293px;top:163px">›</div>
<div class="t m" style="left:177px;top:172px;color:#a5a5a5">Export</div><div class="t m" style="left:293px;top:172px;color:#a5a5a5">›</div>
<div class="t m" style="left:177px;top:182px;color:#a5a5a5">Automation Tools</div><div class="t m" style="left:293px;top:182px;color:#a5a5a5">›</div>
<div class="t m" style="left:177px;top:197px">Print...</div><div class="t m" style="left:278px;top:197px">⌘P</div>
<div class="t m" style="left:177px;top:206px">Order Prints...</div><div class="t m" style="left:293px;top:206px">›</div>
<div class="t m" style="left:177px;top:216px;color:#a5a5a5">Export Creations...</div>
<div class="t m" style="left:177px;top:225px;color:#f2f2f2">Contact Sheet II...</div><div class="t m" style="left:272px;top:225px;color:#f2f2f2">⌥⌘P</div>
<div class="t m" style="left:177px;top:234px;color:#f2f2f2">Picture Package...</div>
</div></body></html>
